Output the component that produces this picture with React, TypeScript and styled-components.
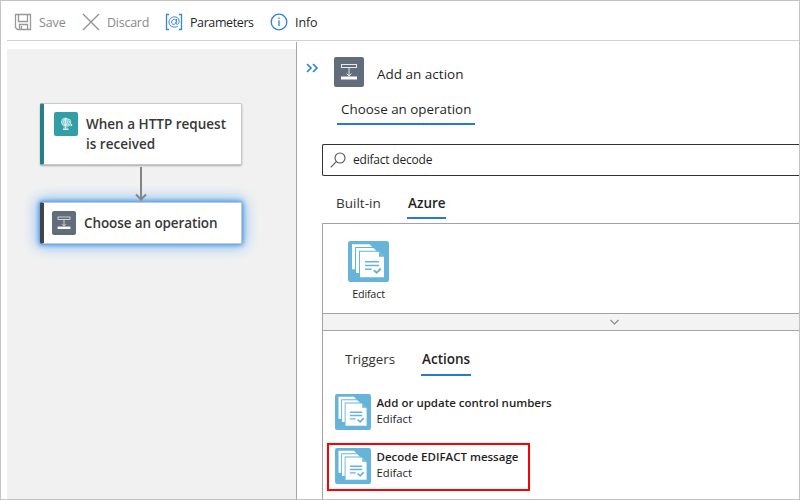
import React from "react";
import styled, { createGlobalStyle } from "styled-components";

const GlobalStyle = createGlobalStyle`
  * { box-sizing: border-box; }
  body { margin: 0; background: #fff; font-family: "Open Sans", "Noto Sans", sans-serif; }
  svg { display: block; flex: none; }
`;

const Window = styled.div`
  width: 800px;
  height: 500px;
  overflow: hidden;
  border: 1px solid #c3c3c3;
  background: #fff;
  display: flex;
  flex-direction: column;
  padding-left: 6px;
`;

const Label = styled.span<{ $size: number; $track?: number; $weight?: number; $color?: string; $line?: number }>`
  font-size: ${(p) => p.$size}px;
  letter-spacing: ${(p) => p.$track ?? 0}px;
  font-weight: ${(p) => p.$weight ?? 400};
  color: ${(p) => p.$color ?? "#1f1f1f"};
  line-height: ${(p) => p.$line ?? 20}px;
  white-space: nowrap;
`;

const Toolbar = styled.div`
  height: 40px;
  flex: none;
  border-bottom: 1px solid #d2d2d2;
  display: flex;
  align-items: center;
  padding: 2px 0 0 7px;
`;

const ToolButton = styled.div<{ $width: number }>`
  width: ${(p) => p.$width}px;
  display: flex;
  align-items: center;
  gap: 7px;

  ${Label} {
    padding-top: 2px;
  }
`;

const Main = styled.div`
  flex: 1;
  display: flex;
  min-height: 0;
`;

const Canvas = styled.div`
  width: 289px;
  margin-top: 8px;
  padding: 54px 0 0 33px;
  background: #f1f1f1;
`;

const Step = styled.div<{ $height: number; $accent: string; $selected?: boolean }>`
  width: 202px;
  height: ${(p) => p.$height}px;
  background: #fff;
  border: 1px solid #c8c8c8;
  border-left: 4px solid ${(p) => p.$accent};
  border-radius: 2px;
  display: flex;
  align-items: flex-start;
  padding: ${(p) => (p.$selected ? "8px 0 0 8px" : "8px 0 0 10px")};
  gap: 8px;
  box-shadow: ${(p) => (p.$selected ? "0 0 4px 1px #3f96f0, 0 0 14px 3px #84bcee" : "0 1px 2px rgba(0,0,0,.3)")};
`;

const StepIcon = styled.div<{ $size: number; $color: string }>`
  width: ${(p) => p.$size}px;
  height: ${(p) => p.$size}px;
  flex: none;
  border-radius: 2px;
  background: ${(p) => p.$color};
`;

const StepTitle = styled.div`
  display: flex;
  flex-direction: column;
  padding-top: 2px;
`;

const Connector = styled.div`
  height: 37px;
  padding-left: 95px;
`;

const Panel = styled.div`
  flex: 1;
  min-width: 0;
  margin-top: 1px;
  border-left: 1px solid #a6a6a6;
  padding-left: 25px;
`;

const PanelHeader = styled.div`
  height: 45px;
  margin-left: -16px;
  display: flex;
  align-items: flex-start;
  padding-top: 15px;
`;

const HeaderIcon = styled.div`
  margin: 0 13px 0 15px;
`;

const HeaderTitle = styled.div`
  padding-top: 5px;
`;

const TabRow = styled.div<{ $height: number; $left: number; $gap?: number }>`
  display: flex;
  align-items: flex-end;
  height: ${(p) => p.$height}px;
  padding-left: ${(p) => p.$left}px;
  gap: ${(p) => p.$gap ?? 0}px;
`;

const Tab = styled.div<{ $width: number; $pad: number; $active?: boolean; $drop?: number }>`
  width: ${(p) => p.$width}px;
  padding: 0 0 ${(p) => p.$drop ?? 4}px ${(p) => p.$pad}px;
  border-bottom: 2px solid ${(p) => (p.$active ? "#2a78d6" : "transparent")};
  display: flex;
`;

const SearchBox = styled.div`
  height: 32px;
  margin-top: 19px;
  border: 1px solid #333;
  border-right: 0;
  border-radius: 2px 0 0 2px;
  display: flex;
  align-items: center;
  gap: 7px;
  padding-left: 7px;
`;

const Results = styled.div`
  margin-top: 4px;
  height: 277px;
  border: solid #a3a3a3;
  border-width: 1px 0 0 1px;
`;

const Connectors = styled.div`
  height: 89px;
  padding: 17px 0 0 25px;
`;

const ConnectorTile = styled.div`
  width: 41px;
  display: flex;
  flex-direction: column;
  align-items: center;
  gap: 2px;
`;

const Divider = styled.div`
  height: 18px;
  background: #f3f3f3;
  border: solid #a3a3a3;
  border-width: 1px 0;
  padding: 5px 0 0 287px;
`;

const Operation = styled.div<{ $marked?: boolean }>`
  height: 48px;
  width: 203px;
  margin-left: 4px;
  border: 2px solid ${(p) => (p.$marked ? "#f00" : "transparent")};
  display: flex;
  padding: 3px 0 0 6px;
  gap: 5.5px;
`;

const OperationList = styled.div`
  display: flex;
  flex-direction: column;
  gap: 6px;
  padding-top: 13px;
`;

const OperationText = styled.div`
  display: flex;
  flex-direction: column;
  padding-top: 1px;
`;

const SaveIcon = () => (
  <svg width="18" height="18" viewBox="0 0 18 18" fill="none" stroke="#999" strokeWidth="1.3">
    <path d="M1.500 1.500h15v15H3.500l-2-2zM4.500 1.500v7h9v-7M5.500 16.500v-5h8v5M7.500 13v3.500" />
  </svg>
);

const DiscardIcon = () => (
  <svg width="18" height="18" viewBox="0 0 18 18" stroke="#929292" strokeWidth="1.3">
    <path d="M1 1l16 16M17 1L1 17" />
  </svg>
);

const ParametersIcon = () => (
  <svg width="18" height="18" viewBox="0 0 18 18" fill="none" stroke="#3488dc" strokeWidth="1.3">
    <path d="M4 1.500H1.500v15H4M14 1.500h2.500v15H14" />
    <path d="M12.800 13.300C8.500 15.500 3.800 13 4 8.800 4.200 2.800 13.800 2 14.100 8 14.200 11.800 10.900 12.500 11.100 9.800L11.600 6M11.300 8.800C10.700 12.200 6.600 12.300 6.700 9.200 6.900 6 10.800 5 11.300 8.300" strokeWidth="1" />
  </svg>
);

const InfoIcon = () => (
  <svg width="18" height="18" viewBox="0 0 18 18" fill="none" stroke="#2e83d6" strokeWidth="1.3">
    <circle cx="9" cy="9" r="7.800" />
    <path d="M9 7.200v5.800M9 4.600v1.300" />
  </svg>
);

const GlobeIcon = () => (
  <svg width="24" height="24" viewBox="0 0 24 24" fill="none" stroke="#e9f8f8" strokeWidth=".8">
    <circle cx="11.500" cy="10" r="4" />
    <path d="M7.500 10h8M11.500 6v8M8.200 8h6.600M8.200 12h6.600M11.500 6c-2.300 2.300-2.300 5.700 0 8M11.500 6c2.300 2.300 2.300 5.700 0 8M15.500 7c1.700 2 1.300 4.300.5 5.500l-2.500 2.500h-4M15 13h3M16.700 11.700L18.200 13l-1.500 1.300M11.500 15v2" />
    <path d="M9 17.200h5.500" strokeWidth="1.4" />
  </svg>
);

const ActionIcon = ({ size }: { size: number }) => (
  <svg width={size} height={size} viewBox="0 0 30 30" fill="none" stroke="#e6e9ec" strokeWidth="1">
    <rect x="7.500" y="7.500" width="15" height="3" />
    <path d="M15 10.500v8M12.500 16.500l2.500 2.500 2.500-2.500" />
    <path d="M7 21h16" stroke="#fff" strokeWidth="3" />
  </svg>
);

const EdifactIcon = ({ size }: { size: number }) => (
  <svg width={size} height={size} viewBox="0 0 41 41">
    <rect width="41" height="41" rx="2.500" fill="#67b4da" />
    <path d="M4 3.200h17.500l4 4v21H4z" fill="#fff" />
    <path d="M7 6h18l5 5v21.500H7z" fill="#67b4da" />
    <path d="M8 7h17.500l4 4v21H8z" fill="#fff" />
    <path d="M11 9.800h20l6 6.500v21H11z" fill="#67b4da" />
    <path d="M12 10.800h18.500l5.500 5.500v20H12z" fill="#fff" />
    <path d="M31 11.300v4.500h4.500z" fill="#67b4da" />
    <g fill="none" stroke="#67b4da" strokeWidth="1.600">
      <path d="M17 20.800h14M17 24.500h14M17 28.300h6.500" />
      <path d="M25.700 29.300l3 2.500 4-4.300" strokeWidth="1.900" />
    </g>
  </svg>
);

export default function App() {
  return (
    <>
      <GlobalStyle />
      <Window>
        <Toolbar>
          <ToolButton $width={68}>
            <SaveIcon />
            <Label $size={12.5} $track={-0.1} $color="#888">Save</Label>
          </ToolButton>
          <ToolButton $width={83}>
            <DiscardIcon />
            <Label $size={12.5} $track={-0.25} $color="#888">Discard</Label>
          </ToolButton>
          <ToolButton $width={105}>
            <ParametersIcon />
            <Label $size={12.5} $track={-0.4}>Parameters</Label>
          </ToolButton>
          <ToolButton $width={60}>
            <InfoIcon />
            <Label $size={12.5} $track={-0.1}>Info</Label>
          </ToolButton>
        </Toolbar>
        <Main>
          <Canvas>
            <Step $height={62} $accent="#22818b">
              <StepIcon $size={24} $color="#329ea6"><GlobeIcon /></StepIcon>
              <StepTitle>
                <Label $size={13.5} $weight={560} $color="#383838">When a HTTP request</Label>
                <Label $size={13.5} $weight={560} $color="#383838">is received</Label>
              </StepTitle>
            </Step>
            <Connector>
              <svg width="13" height="37" viewBox="0 0 13 37" fill="none" stroke="#858585" strokeWidth="2">
                <path d="M6 2v32M1 29.500l5 5 5-5" />
              </svg>
            </Connector>
            <Step $height={42} $accent="#444" $selected>
              <StepIcon $size={24} $color="#626d7b"><ActionIcon size={24} /></StepIcon>
              <StepTitle>
                <Label $size={13.5} $weight={560} $track={-0.1} $color="#383838">Choose an operation</Label>
              </StepTitle>
            </Step>
          </Canvas>
          <Panel>
            <PanelHeader>
              <svg width="13" height="22" viewBox="0 0 13 22" fill="none" stroke="#2e83de" strokeWidth="1.700">
                <path d="M1 7l4 4-4 4M7 7l4 4-4 4" />
              </svg>
              <HeaderIcon>
                <StepIcon $size={30} $color="#626d7b"><ActionIcon size={30} /></StepIcon>
              </HeaderIcon>
              <HeaderTitle><Label $size={13.5}>Add an action</Label></HeaderTitle>
            </PanelHeader>
            <TabRow $height={38} $left={15}>
              <Tab $width={138} $pad={4} $active>
                <Label $size={13.4}>Choose an operation</Label>
              </Tab>
            </TabRow>
            <SearchBox>
              <svg width="16" height="16" viewBox="0 0 16 16" fill="none" stroke="#555" strokeWidth="1.100">
                <circle cx="10" cy="6" r="5" />
                <path d="M6.300 9.700L.7 15.300" />
              </svg>
              <Label $size={12} $track={-0.2}>edifact decode</Label>
            </SearchBox>
            <TabRow $height={43} $left={14} $gap={26}>
              <Tab $width={45} $pad={0}><Label $size={13.5} $color="#333">Built-in</Label></Tab>
              <Tab $width={39} $pad={1} $active><Label $size={13.5} $weight={560}>Azure</Label></Tab>
            </TabRow>
            <Results>
              <Connectors>
                <ConnectorTile>
                  <EdifactIcon size={41} />
                  <Label $size={10.8} $track={-0.2}>Edifact</Label>
                </ConnectorTile>
              </Connectors>
              <Divider>
                <svg width="9" height="6" viewBox="0 0 9 6" fill="none" stroke="#888" strokeWidth="1.100">
                  <path d="M.500 1l4 4 4-4" />
                </svg>
              </Divider>
              <TabRow $height={45} $left={22} $gap={26}>
                <Tab $width={50} $pad={0} $drop={5}><Label $size={13.4} $color="#333">Triggers</Label></Tab>
                <Tab $width={50} $pad={1} $active $drop={5}><Label $size={13.5} $weight={560}>Actions</Label></Tab>
              </TabRow>
              <OperationList>
                <Operation>
                  <EdifactIcon size={36} />
                  <OperationText>
                    <Label $size={11.5} $weight={560} $line={16}>Add or update control numbers</Label>
                    <Label $size={11.3} $line={16}>Edifact</Label>
                  </OperationText>
                </Operation>
                <Operation $marked>
                  <EdifactIcon size={36} />
                  <OperationText>
                    <Label $size={11.5} $weight={560} $line={16}>Decode EDIFACT message</Label>
                    <Label $size={11.3} $line={16}>Edifact</Label>
                  </OperationText>
                </Operation>
              </OperationList>
            </Results>
          </Panel>
        </Main>
      </Window>
    </>
  );
}
